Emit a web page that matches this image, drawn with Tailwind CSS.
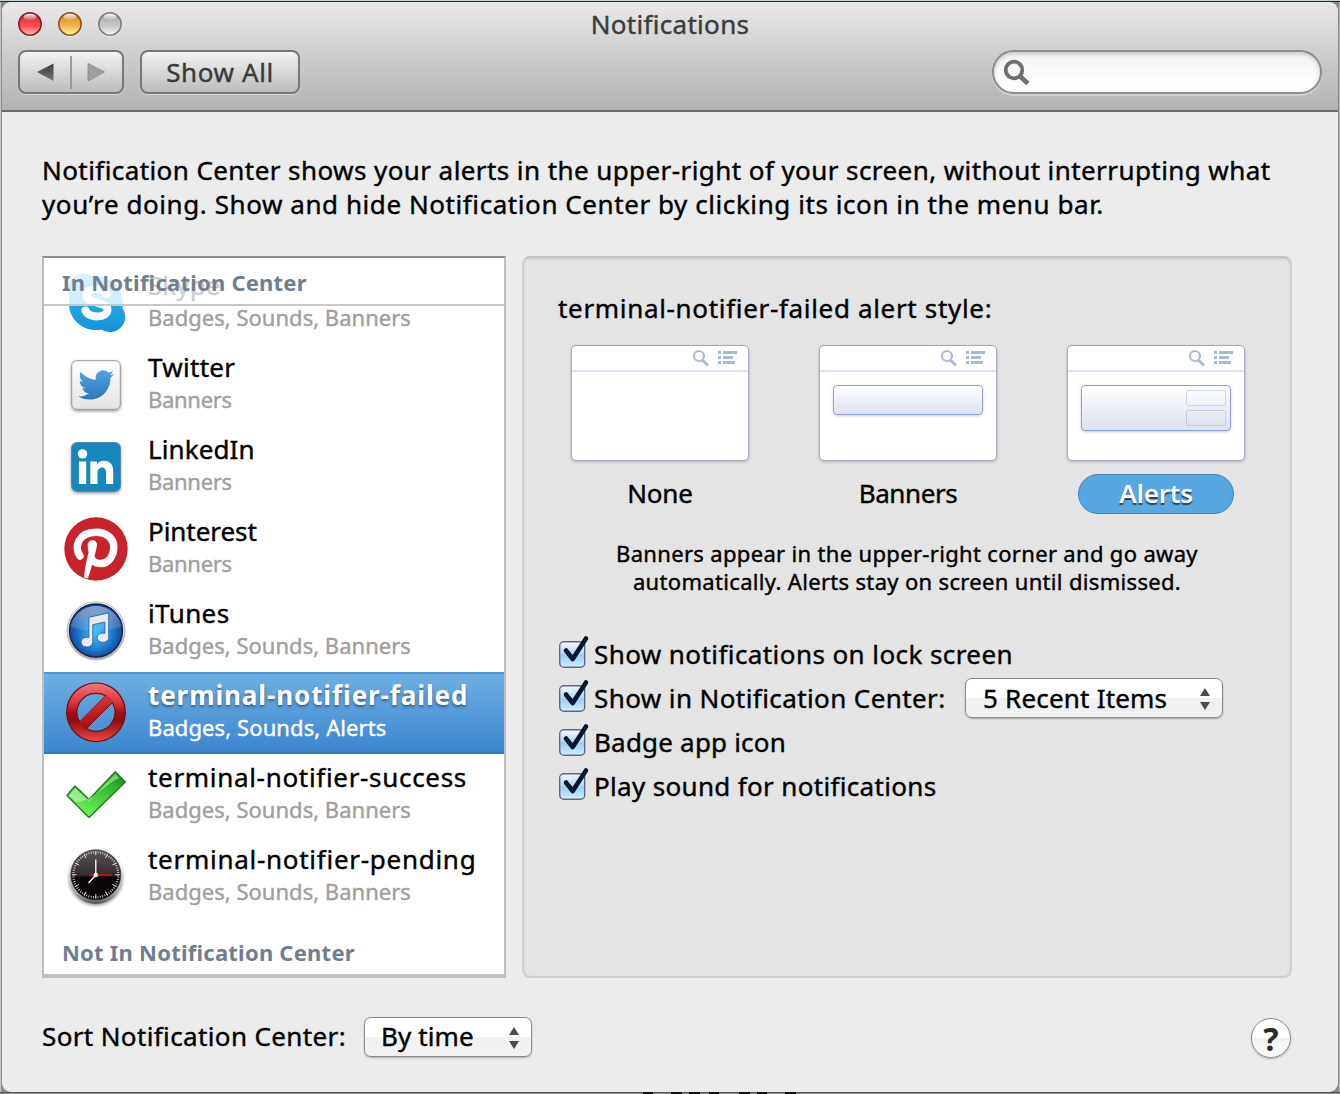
<!DOCTYPE html>
<html lang="en">
<head>
<meta charset="utf-8">
<title>Notifications</title>
<script src="https://cdn.jsdelivr.net/npm/@tailwindcss/browser@4"></script>
</head>
<body class="w-[1340px] h-[1094px] overflow-hidden relative bg-[#8a8a8a] text-[26px] text-black [-webkit-text-stroke:0.4px] font-['Noto_Sans','Open_Sans',sans-serif] whitespace-nowrap">
<!-- desktop showing around the window -->
<div class="absolute inset-x-0 top-0 h-[1px] bg-[#c9cfcc]"></div>
<div class="absolute inset-x-0 top-[1px] h-[1px] bg-[#1d2f2a]"></div>
<div class="absolute left-0 top-[2px] w-[1px] h-[1090px] bg-[#c4c4c4]"></div>
<div class="absolute right-0 top-[2px] w-[1px] h-[1090px] bg-[#b4b4b4]"></div>
<svg class="absolute left-0 bottom-0" width="1340" height="2" fill="#111"><rect width="1340" height="1" fill="#555"/><path d="M643 0h10v2h-10zM671 0h11v2h-11zM689 0h11v2h-11zM709 0h10v2h-10zM739 0h11v2h-11zM757 0h10v2h-10zM785 0h11v2h-11z"/></svg>

<div class="relative ml-[2px] mt-[2px] w-[1336px] h-[1090px] rounded-[9px] bg-[#ececec] overflow-hidden flex flex-col">
  <header class="h-[110px] shrink-0 border-b-2 border-[#6a6a6a] bg-linear-to-b from-[#e9e9e9] to-[#b2b2b2]">
    <div class="grid grid-cols-[1fr_auto_1fr] h-[42px]">
      <svg class="mt-[9px] ml-[15px]" width="108" height="28" viewBox="0 0 108 28">
        <defs>
          <linearGradient id="lr" x2="0" y2="1"><stop offset="0" stop-color="#a81a22"/><stop offset=".3" stop-color="#e53c40"/><stop offset=".6" stop-color="#f94f4f"/><stop offset="1" stop-color="#ffc0bd"/></linearGradient>
          <linearGradient id="ly" x2="0" y2="1"><stop offset="0" stop-color="#b3661a"/><stop offset=".3" stop-color="#e69a38"/><stop offset=".6" stop-color="#f4b950"/><stop offset="1" stop-color="#fff6a5"/></linearGradient>
          <linearGradient id="lg" x2="0" y2="1"><stop offset="0" stop-color="#8e8e8e"/><stop offset=".35" stop-color="#b9b9b9"/><stop offset=".6" stop-color="#c9c9c9"/><stop offset="1" stop-color="#f6f6f6"/></linearGradient>
          <linearGradient id="shine" x2="0" y2="1"><stop offset="0" stop-color="#fff" stop-opacity=".95"/><stop offset="1" stop-color="#fff" stop-opacity=".1"/></linearGradient>
        </defs>
        <g fill="#fff" opacity=".5"><circle cx="13" cy="14" r="12"/><circle cx="53" cy="14" r="12"/><circle cx="93" cy="14" r="12"/></g>
        <circle cx="13" cy="13" r="11.200" fill="url(#lr)" stroke="#85222a" stroke-width="1.600"/>
        <circle cx="53" cy="13" r="11.200" fill="url(#ly)" stroke="#8b5a26" stroke-width="1.600"/>
        <circle cx="93" cy="13" r="11.200" fill="url(#lg)" stroke="#808080" stroke-width="1.600"/>
        <g fill="url(#shine)"><ellipse cx="13" cy="6" rx="6.500" ry="3.200"/><ellipse cx="53" cy="6" rx="6.500" ry="3.200"/><ellipse cx="93" cy="6" rx="6.500" ry="3.200"/></g>
      </svg>
      <h1 class="leading-[44px] tracking-[0.3px] text-[#3c3c3c]">Notifications</h1>
      <span></span>
    </div>
    <div class="mt-[6px] pl-4 pr-4 flex h-[44px]">
      <div class="w-[106px] h-[44px] rounded-[8px] border-2 border-[#777] bg-linear-to-b from-[#f4f4f4] to-[#bcbcbc] flex items-center justify-center shadow-[0_1px_0_#ffffff70]">
        <svg width="70" height="34" viewBox="0 0 70 34"><defs><linearGradient id="ba" x2="0" y2="1"><stop offset="0" stop-color="#3c3c3c"/><stop offset="1" stop-color="#777"/></linearGradient></defs><path d="M1 17 17.500 8.500v17.500z" fill="url(#ba)"/><path d="M35 1v33" stroke="#8c8c8c" stroke-width="1.600"/><path d="M68.500 17 52 8.500v17.500z" fill="#a0a0a0" stroke="#888" stroke-width=".8"/></svg>
      </div>
      <div class="ml-4 w-[160px] h-[44px] rounded-[8px] border-2 border-[#777] bg-linear-to-b from-[#f4f4f4] to-[#bcbcbc] text-center leading-[41px] tracking-[0.6px] text-[#3a3a3a] shadow-[0_1px_0_#ffffff70]">Show All</div>
      <div class="ml-auto w-[330px] h-[44px] rounded-full border-2 border-[#8c8c8c] bg-linear-to-b from-[#f4f4f4] to-white flex items-center pl-[8px] shadow-[inset_0_2px_4px_#0000002e,0_2px_1px_#ffffff60]">
        <svg width="28" height="28" viewBox="0 0 28 28" fill="none" stroke="#6f6f6f"><circle cx="12" cy="12" r="8.300" stroke-width="3.800"/><path d="M17.800 18l8 7.500" stroke-width="4.600"/></svg>
      </div>
    </div>
  </header>

  <div class="pl-[40px] pt-[41px] leading-[34px]">
    <div class="tracking-[0.42px]">Notification Center shows your alerts in the upper-right of your screen, without interrupting what</div>
    <div class="tracking-[0.57px]">you’re doing. Show and hide Notification Center by clicking its icon in the menu bar.</div>
  </div>

  <main class="mt-[35px] ml-[40px] flex gap-4">
    <section class="relative w-[464px] h-[722px] bg-white border-2 border-[#bebebe] border-t-[#8e8e8e] border-b-[4px] border-b-[#c2c2c2] overflow-hidden">
      <div class="pt-[4px]">
        <div class="h-[82px] pl-[20px] flex gap-[20px]">
          <svg class="mt-[9px]" width="64" height="64" viewBox="0 0 64 64"><defs><linearGradient id="sk" x2="0" y2="1"><stop offset="0" stop-color="#2fc0f3"/><stop offset="1" stop-color="#1592d6"/></linearGradient></defs><path d="M20 3a15.500 15.500 0 0 1 9 2.500A27 27 0 0 1 58.500 37a15.300 15.300 0 0 1-21 21.500A27 27 0 0 1 5.500 26 15.500 15.500 0 0 1 20 3z" fill="url(#sk)"/><path d="M42.500 23C40 16.500 22.500 16 22.500 24.500 22.500 33 43.500 30.500 43.500 38.500 43.500 47.500 24.500 47.500 21.500 39.500" fill="none" stroke="#fff" stroke-width="8" stroke-linecap="round"/></svg>
          <div class="pt-[7px]"><div class="leading-[32px] tracking-[0.1px]">Skype</div><div class="text-[22px] leading-[33px] tracking-[0.02px] text-[#9f9f9f]">Badges, Sounds, Banners</div></div>
        </div>
        <div class="h-[82px] pl-[20px] flex gap-[20px]">
          <svg class="mt-[9px]" width="64" height="64" viewBox="0 0 64 64"><defs><linearGradient id="tw" x2="0" y2="1"><stop offset="0" stop-color="#fff"/><stop offset="1" stop-color="#e4e4e4"/></linearGradient><linearGradient id="tb" x2="0" y2="1"><stop offset="0" stop-color="#4fa3e3"/><stop offset="1" stop-color="#2f78b5"/></linearGradient><filter id="sh" x="-20%" y="-20%" width="140%" height="150%"><feDropShadow dx="0" dy="1.500" stdDeviation="1.500" flood-opacity=".4"/></filter></defs><rect x="7.700" y="7.700" width="48.600" height="48.600" rx="5" fill="url(#tw)" stroke="#989898" filter="url(#sh)"/><path transform="translate(14.300 14.200) scale(1.490)" fill="url(#tb)" d="M23.953 4.570a10 10 0 01-2.825.775 4.958 4.958 0 002.163-2.723c-.951.555-2.005.959-3.127 1.184a4.920 4.920 0 00-8.384 4.482C7.690 8.095 4.067 6.130 1.640 3.162a4.822 4.822 0 00-.666 2.475c0 1.710.870 3.213 2.188 4.096a4.904 4.904 0 01-2.228-.616v.060a4.923 4.923 0 003.946 4.827 4.996 4.996 0 01-2.212.085 4.936 4.936 0 004.604 3.417 9.867 9.867 0 01-6.102 2.105c-.390 0-.779-.023-1.170-.067a13.995 13.995 0 007.557 2.209c9.053 0 13.998-7.496 13.998-13.985 0-.210 0-.420-.015-.630A9.935 9.935 0 0024 4.590z"/></svg>
          <div class="pt-[7px]"><div class="leading-[32px] tracking-[0.3px]">Twitter</div><div class="text-[22px] leading-[33px] tracking-[-0.3px] text-[#9f9f9f]">Banners</div></div>
        </div>
        <div class="h-[82px] pl-[20px] flex gap-[20px]">
          <svg class="mt-[9px]" width="64" height="64" viewBox="0 0 64 64"><rect x="7.700" y="7.700" width="48.600" height="48.600" rx="5" fill="#1787bd" stroke="#4d7f99" filter="url(#sh)"/><g fill="#fff"><circle cx="18.500" cy="18.900" r="4.700"/><path d="M14.900 26.500h7.300V49h-7.300zM26.300 26.500h6.600v3c1.200-2.200 3.800-3.700 6.800-3.700 6.800 0 9.500 4.200 9.500 10.600V49h-7.200V38c0-3.200-.9-5.600-3.800-5.600-3.200 0-4.700 2.400-4.700 5.600v11h-7.200z"/></g></svg>
          <div class="pt-[7px]"><div class="leading-[32px] tracking-[0.1px]">LinkedIn</div><div class="text-[22px] leading-[33px] tracking-[-0.3px] text-[#9f9f9f]">Banners</div></div>
        </div>
        <div class="h-[82px] pl-[20px] flex gap-[20px]">
          <svg class="mt-[9px]" width="64" height="64" viewBox="0 0 64 64"><circle cx="32" cy="32" r="31.700" fill="#c8232c"/><path d="M16 39C9.500 30 14.500 15.300 32 15.300 43 15.300 49.800 22 49.800 30 49.800 40 43.500 46.600 37 46.600 32.500 46.600 29.500 45 27.800 42" fill="none" stroke="#fff" stroke-width="7.500" stroke-linecap="round"/><path d="M23.700 28C23.700 21.500 33.300 21.500 33 28 32.500 33 27 52 24 61.500L20 60.500C20.500 52 22.500 44 24.500 35.500 24 32 23.700 30 23.700 28z" fill="#fff"/></svg>
          <div class="pt-[7px]"><div class="leading-[32px] tracking-[-0.05px]">Pinterest</div><div class="text-[22px] leading-[33px] tracking-[-0.3px] text-[#9f9f9f]">Banners</div></div>
        </div>
        <div class="h-[82px] pl-[20px] flex gap-[20px]">
          <svg class="mt-[9px]" width="64" height="64" viewBox="0 0 64 64"><defs><radialGradient id="it" cy=".55"><stop offset="0" stop-color="#3cc2f7"/><stop offset=".55" stop-color="#2683d6"/><stop offset="1" stop-color="#134390"/></radialGradient><linearGradient id="si" x2="0" y2="1"><stop offset="0" stop-color="#f4f4f4"/><stop offset=".5" stop-color="#d4d4d4"/><stop offset="1" stop-color="#a8a8a8"/></linearGradient><linearGradient id="gl" x2="0" y2="1"><stop offset="0" stop-color="#fff" stop-opacity=".5"/><stop offset="1" stop-color="#fff" stop-opacity=".1"/></linearGradient></defs><circle cx="32" cy="31.800" r="29" fill="url(#si)" stroke="#aaa" stroke-width=".8"/><circle cx="32" cy="31.500" r="26.500" fill="url(#it)" stroke="#10284c" stroke-width="1.300"/><path d="M6.500 28a26 26 0 0 1 51 0c-15 5-36 5-51 0z" fill="url(#gl)"/><path d="M24.900 18.300 44.700 13.900V38.500A5.800 4.700 0 1 1 40.900 34.300V23L28.800 25.700V43A5.900 4.900 0 1 1 24.900 38.500z" fill="#e8ebee" stroke="#1b5a9e" stroke-width=".8"/></svg>
          <div class="pt-[7px]"><div class="leading-[32px] tracking-[0.4px]">iTunes</div><div class="text-[22px] leading-[33px] tracking-[0.02px] text-[#9f9f9f]">Badges, Sounds, Banners</div></div>
        </div>
        <div class="h-[82px] pl-[20px] flex gap-[20px] border-y-2 border-t-[#5496d2] border-b-[#3677bd] bg-linear-to-b from-[#6eb0e3] to-[#3c85cf] text-white">
          <svg class="mt-[7px]" width="64" height="64" viewBox="0 0 64 64"><defs><linearGradient id="no" x2="0" y2="1"><stop offset="0" stop-color="#f4777a"/><stop offset=".35" stop-color="#d83035"/><stop offset=".5" stop-color="#a80f14"/><stop offset=".65" stop-color="#8f0b0e"/><stop offset="1" stop-color="#f04a42"/></linearGradient><linearGradient id="ns" x2="0" y2="1"><stop offset="0" stop-color="#d8333a"/><stop offset="1" stop-color="#a50b10"/></linearGradient></defs><path d="M32 2a29.300 29.300 0 1 0 .01 0zM32 12.300a19 19 0 1 1-.01 0z" fill="url(#no)" stroke="#6e1016" stroke-width="1.200"/><path d="M15 42 42.500 14.500 49 21 21.500 48.500z" fill="url(#ns)"/><path d="M15.800 40.500 42 14.300M22 48 48.500 21.500" stroke="#6e1016" stroke-width="1"/></svg>
          <div class="pt-[5px]"><div class="leading-[33px] font-bold tracking-[0.9px] [-webkit-text-stroke:0px] [text-shadow:0_2px_3px_#0000006b]">terminal-notifier-failed</div><div class="text-[22px] leading-[31px] tracking-[0.1px]">Badges, Sounds, Alerts</div></div>
        </div>
        <div class="h-[82px] pl-[20px] flex gap-[20px]">
          <svg class="mt-[9px]" width="64" height="64" viewBox="0 0 64 64"><defs><linearGradient id="ck" x1="1" y1="0" x2=".4" y2="1"><stop offset="0" stop-color="#128a10"/><stop offset=".35" stop-color="#35b52e"/><stop offset="1" stop-color="#6bf45c"/></linearGradient></defs><path d="M3 32.500 11 23 25 36.500 51.300 8.700 61.300 19 25 54.500z" fill="url(#ck)" stroke="#17811a" stroke-width="1.400" stroke-linejoin="round"/><path d="M5 32.500 11.200 25 25 38.500 51.300 10.500 55 15 C40 22 30 38 12 39z" fill="#fff" opacity=".42"/></svg>
          <div class="pt-[7px]"><div class="leading-[32px] tracking-[0.68px]">terminal-notifier-success</div><div class="text-[22px] leading-[33px] tracking-[0.02px] text-[#9f9f9f]">Badges, Sounds, Banners</div></div>
        </div>
        <div class="h-[82px] pl-[20px] flex gap-[20px]">
          <svg class="mt-[9px]" width="64" height="64" viewBox="0 0 64 64"><defs><linearGradient id="cl" x2="0" y2="1"><stop offset="0" stop-color="#5a5355"/><stop offset=".5" stop-color="#352e30"/><stop offset=".55" stop-color="#0c0406"/><stop offset="1" stop-color="#080304"/></linearGradient><linearGradient id="rm" x2="0" y2="1"><stop offset=".2" stop-color="#f0f0f0"/><stop offset=".8" stop-color="#a8a8a8"/><stop offset="1" stop-color="#555"/></linearGradient></defs><circle cx="31.800" cy="31.800" r="27.200" fill="url(#rm)" filter="url(#sh)"/><circle cx="31.800" cy="29.800" r="25" fill="url(#cl)" stroke="#333" stroke-width=".7"/><circle cx="31.800" cy="29.800" r="22.500" fill="none" stroke="#ddd" stroke-width="2.200" pathLength="120" stroke-dasharray=".7 1.300" stroke-dashoffset=".35"/><circle cx="31.800" cy="29.800" r="21.500" fill="none" stroke="#ddd" stroke-width="4.500" pathLength="120" stroke-dasharray=".9 9.100" stroke-dashoffset=".45"/><path d="M31.800 30V14.500M31.800 30 24.500 38" stroke="#fff" stroke-width="1.300"/><path d="M25 30h22.500" stroke="#c8141c" stroke-width="1.700"/><circle cx="31.800" cy="30" r="2.200" fill="#fff"/></svg>
          <div class="pt-[7px]"><div class="leading-[32px] tracking-[0.72px]">terminal-notifier-pending</div><div class="text-[22px] leading-[33px] tracking-[0.02px] text-[#9f9f9f]">Badges, Sounds, Banners</div></div>
        </div>
      </div>
      <h2 class="mt-[17px] pl-[18px] leading-[34px] text-[22px] font-bold tracking-[0.23px] text-[#6f7f8f] [-webkit-text-stroke:0px]">Not In Notification Center</h2>
      <!-- sticky section header, translucent over the scrolled row -->
      <h2 class="absolute top-0 inset-x-0 h-[48px] pl-[18px] leading-[48px] text-[22px] font-bold tracking-[0.22px] text-[#6f7f8f] [-webkit-text-stroke:0px] bg-white/80 border-b-2 border-[#c8c8c8]">In Notification Center</h2>
    </section>

    <section class="w-[770px] h-[722px] rounded-[8px] bg-[#e4e4e4] border-2 border-[#cfcfcf] border-t-[#c2c2c2] shadow-[inset_0_1px_3px_#0000001c] pl-[34px]">
      <div class="mt-[33px] leading-[34px] tracking-[0.67px]">terminal-notifier-failed alert style:</div>
      <div class="mt-[20px] ml-[13px] flex gap-[70px]">
        <div class="w-[178px] flex flex-col items-center">
          <div class="w-[178px] h-[116px] bg-white border border-[#a3abc2] rounded-[5px] shadow-[0_1px_3px_#00000033]">
            <div class="h-[26px] border-b-2 border-[#dde3f2] flex justify-end pr-[10px]"><svg width="46" height="24" viewBox="0 0 46 24" fill="none" stroke="#a9b9dc"><circle cx="7" cy="10" r="5" stroke-width="2.200"/><path d="M10.500 14l5.500 5.500" stroke-width="3"/><path d="M26 6.500h3M31 6.500h14M26 11.500h3M31 11.500h10M26 16.500h3M31 16.500h12" stroke-width="3"/></svg></div>
          </div>
          <div class="mt-[13px] h-10 leading-[38px] tracking-[-0.2px]">None</div>
        </div>
        <div class="w-[178px] flex flex-col items-center">
          <div class="w-[178px] h-[116px] bg-white border border-[#a3abc2] rounded-[5px] shadow-[0_1px_3px_#00000033]">
            <div class="h-[26px] border-b-2 border-[#dde3f2] flex justify-end pr-[10px]"><svg width="46" height="24" viewBox="0 0 46 24" fill="none" stroke="#a9b9dc"><circle cx="7" cy="10" r="5" stroke-width="2.200"/><path d="M10.500 14l5.500 5.500" stroke-width="3"/><path d="M26 6.500h3M31 6.500h14M26 11.500h3M31 11.500h10M26 16.500h3M31 16.500h12" stroke-width="3"/></svg></div>
            <div class="mx-auto mt-[13px] w-[150px] h-[30px] rounded-[4px] border border-[#93a3cf] bg-linear-to-b from-white to-[#dce1ef] shadow-[0_1px_3px_#00000030]"></div>
          </div>
          <div class="mt-[13px] h-10 leading-[38px] tracking-[-0.4px]">Banners</div>
        </div>
        <div class="w-[178px] flex flex-col items-center">
          <div class="w-[178px] h-[116px] bg-white border border-[#a3abc2] rounded-[5px] shadow-[0_1px_3px_#00000033]">
            <div class="h-[26px] border-b-2 border-[#dde3f2] flex justify-end pr-[10px]"><svg width="46" height="24" viewBox="0 0 46 24" fill="none" stroke="#a9b9dc"><circle cx="7" cy="10" r="5" stroke-width="2.200"/><path d="M10.500 14l5.500 5.500" stroke-width="3"/><path d="M26 6.500h3M31 6.500h14M26 11.500h3M31 11.500h10M26 16.500h3M31 16.500h12" stroke-width="3"/></svg></div>
            <div class="mx-auto mt-[13px] w-[150px] h-[46px] rounded-[4px] border border-[#8fa0cd] bg-linear-to-b from-white to-[#dce1ef] shadow-[0_1px_3px_#00000038] flex flex-col items-end gap-1 pt-1 pr-1">
              <div class="w-10 h-4 rounded-[2px] border border-[#cdd5e9]"></div>
              <div class="w-10 h-4 rounded-[2px] border border-[#c3cce4]"></div>
            </div>
          </div>
          <div class="mt-[13px] w-[156px] h-10 rounded-full border-[1.500px] border-[#3d84bd] bg-[#58a7e0] text-center text-white leading-[36px] font-semibold tracking-[-0.2px] [-webkit-text-stroke:0px] [text-shadow:0_2px_1px_#00000099]">Alerts</div>
        </div>
      </div>
      <div class="mt-[25px] pr-[34px] text-center text-[22px] leading-[28px]">
        <div class="tracking-[0.33px]">Banners appear in the upper-right corner and go away</div>
        <div class="tracking-[0.33px]">automatically. Alerts stay on screen until dismissed.</div>
      </div>
      <div class="mt-[37px]">
        <label class="flex h-[44px] leading-[44px]"><svg class="mt-[2px] mr-[4px] shrink-0" width="32" height="36" viewBox="0 0 32 36"><defs><linearGradient id="cb" x2="0" y2="1"><stop offset="0" stop-color="#f3f8fd"/><stop offset=".49" stop-color="#b4d7f4"/><stop offset=".51" stop-color="#9bcbf3"/><stop offset="1" stop-color="#d0f0ff"/></linearGradient></defs><rect x="1.700" y="7.700" width="25" height="25.600" rx="4" fill="url(#cb)" stroke="#626781" stroke-width="1.400"/><path d="M8 16.500 14.700 25 28 4.500" fill="none" stroke="#07182e" stroke-width="4.600" stroke-linecap="round" stroke-linejoin="round"/></svg><span class="tracking-[0.42px]">Show notifications on lock screen</span></label>
        <div class="flex h-[44px] leading-[44px]"><svg class="mt-[2px] mr-[4px] shrink-0" width="32" height="36" viewBox="0 0 32 36"><rect x="1.700" y="7.700" width="25" height="25.600" rx="4" fill="url(#cb)" stroke="#626781" stroke-width="1.400"/><path d="M8 16.500 14.700 25 28 4.500" fill="none" stroke="#07182e" stroke-width="4.600" stroke-linecap="round" stroke-linejoin="round"/></svg><span class="w-[371px] tracking-[0.41px]">Show in Notification Center:</span>
          <div class="mt-[2px] w-[258px] h-[40px] rounded-[7px] border-[1.500px] border-[#8a8a8a] bg-linear-to-b from-white from-50% via-[#f1f1f1] via-51% to-[#f0f0f0] shadow-[0_1px_2px_#00000045] flex justify-between pl-[17px] pr-[11px] leading-[39px]"><span class="tracking-[0.2px]">5 Recent Items</span><svg class="mt-[8px]" width="12" height="24" viewBox="0 0 12 24" fill="#4b4b4b"><path d="M1 9 6 1l5 8zM1 15l5 8 5-8z"/></svg></div>
        </div>
        <label class="flex h-[44px] leading-[44px]"><svg class="mt-[2px] mr-[4px] shrink-0" width="32" height="36" viewBox="0 0 32 36"><rect x="1.700" y="7.700" width="25" height="25.600" rx="4" fill="url(#cb)" stroke="#626781" stroke-width="1.400"/><path d="M8 16.500 14.700 25 28 4.500" fill="none" stroke="#07182e" stroke-width="4.600" stroke-linecap="round" stroke-linejoin="round"/></svg><span class="tracking-[0.2px]">Badge app icon</span></label>
        <label class="flex h-[44px] leading-[44px]"><svg class="mt-[2px] mr-[4px] shrink-0" width="32" height="36" viewBox="0 0 32 36"><rect x="1.700" y="7.700" width="25" height="25.600" rx="4" fill="url(#cb)" stroke="#626781" stroke-width="1.400"/><path d="M8 16.500 14.700 25 28 4.500" fill="none" stroke="#07182e" stroke-width="4.600" stroke-linecap="round" stroke-linejoin="round"/></svg><span class="tracking-[0.33px]">Play sound for notifications</span></label>
      </div>
    </section>
  </main>

  <footer class="mt-[39px] pl-[40px] pr-[47px] flex h-[42px]">
    <span class="w-[322px] leading-[38px] tracking-[0.37px]">Sort Notification Center:</span>
    <div class="w-[168px] h-[40px] rounded-[7px] border-[1.500px] border-[#8a8a8a] bg-linear-to-b from-white from-50% via-[#f1f1f1] via-51% to-[#f3f3f3] shadow-[0_1px_2px_#00000045] flex justify-between pl-[16px] pr-[11px] leading-[37px]"><span class="tracking-[0.1px]">By time</span><svg class="mt-[8px]" width="12" height="24" viewBox="0 0 12 24" fill="#4b4b4b"><path d="M1 9 6 1l5 8zM1 15l5 8 5-8z"/></svg></div>
    <div class="ml-auto mt-[1px] size-10 rounded-full border-[1.500px] border-[#8a8a8a] bg-linear-to-b from-white from-50% via-[#f1f1f1] via-51% to-white shadow-[0_1px_2px_#00000045] text-center leading-[40px] text-[32px] font-bold text-[#2b2b2b] [-webkit-text-stroke:0px]">?</div>
  </footer>
</div>
</body>
</html>
